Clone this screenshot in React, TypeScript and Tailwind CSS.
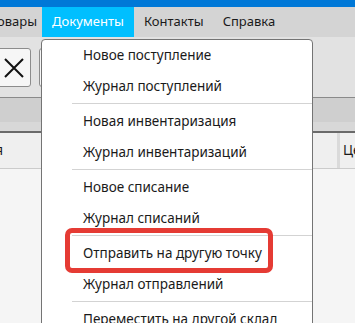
import React from 'react';

const groups: string[][] = [
  ['Новое поступление', 'Журнал поступлений'],
  ['Новая инвентаризация', 'Журнал инвентаризаций'],
  ['Новое списание', 'Журнал списаний'],
  ['Отправить на другую точку', 'Журнал отправлений'],
  ['Переместить на другой склад', 'Журнал перемещений'],
];

const App: React.FC = () => {
  return (
    <div
      className="relative w-[355px] h-[323px] overflow-hidden bg-[#f5f5f5] text-[13.5px] text-[#1a1a1a]"
      style={{ fontFamily: '"Noto Sans", "Open Sans", sans-serif' }}
    >
      {/* title strip */}
      <div className="h-[7px] bg-[#0078d7]" />

      {/* menu bar */}
      <div className="h-[30px] bg-[#d4d4d4] flex items-center whitespace-nowrap text-[13px]">
        <div className="w-[37px] h-full flex items-center justify-end">Товары</div>
        <div className="ml-[5px] w-[92px] h-full bg-[#00bfff] text-white flex items-center justify-center">
          Документы
        </div>
        <div className="ml-[10px] h-full flex items-center">Контакты</div>
        <div className="ml-[19px] h-full flex items-center">Справка</div>
      </div>

      {/* toolbar */}
      <div className="h-[60px] bg-[#e2e2e2] flex items-start pt-[11px]">
        <div className="ml-[-10px] w-[41px] h-[39px] rounded-[3px] border border-[#8c8c8c] bg-[#f6f6f6] flex items-center justify-center">
          <svg width="20" height="20" viewBox="0 0 20 20" className="ml-[6px]">
            <path d="M1 1 L19 19 M19 1 L1 19" stroke="#111" strokeWidth="2" fill="none" />
          </svg>
        </div>
        <div className="ml-[8px] w-[40px] h-[39px] rounded-[3px] border border-[#8c8c8c] bg-[#f6f6f6]" />
      </div>
      <div className="h-px bg-[#8a8a8a]" />

      {/* filter band */}
      <div className="h-[24px] bg-[#cfcfcf]" />
      <div className="h-[9px] bg-[#d8d8d8]" />
      <div className="h-[2px] bg-[#6a6a6a]" />

      {/* table header */}
      <div className="h-[35px] bg-[#efefef] flex items-stretch whitespace-nowrap">
        <div className="w-[3px] flex items-center justify-end">Наименования</div>
        <div className="flex-1" />
        <div className="w-[3px] bg-[#dadada]" />
        <div className="w-[15px] pl-[3px] flex items-center">Цена</div>
      </div>
      <div className="h-px bg-[#cbcbcb]" />

      {/* dropdown */}
      <div className="absolute left-[41px] top-[39px] w-[272px] h-[300px] bg-white border border-[#747474] rounded-[4px] overflow-hidden">
        {groups.map((g, gi) => (
          <div key={gi}>
            {gi > 0 && (
              <div className="pt-px pb-[2px] pl-[30px]">
                <div className="h-px bg-[#d3d3d3]" />
              </div>
            )}
            {g.map((t) => (
              <div key={t} className="h-[31px] leading-[31px] pl-[41px] whitespace-nowrap">
                {t}
              </div>
            ))}
          </div>
        ))}
      </div>

      {/* highlight */}
      <div className="absolute left-[65px] top-[228px] w-[208px] h-[45px] rounded-[7px] border-[5px] border-[#e53b34]" />
    </div>
  );
};

export default App;
